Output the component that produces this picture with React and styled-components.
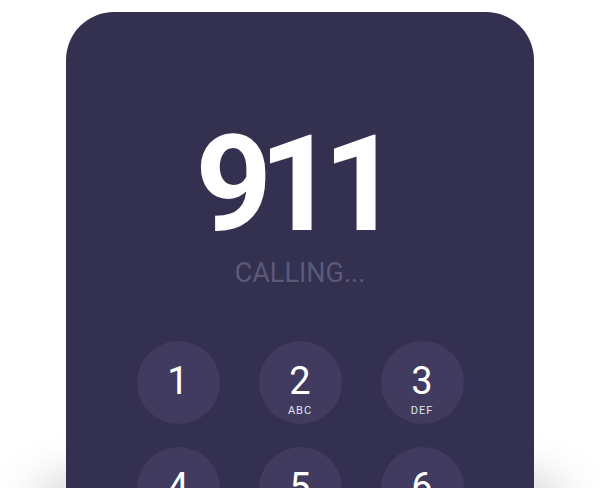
import React from "react";
import styled, { createGlobalStyle } from "styled-components";

const Global = createGlobalStyle`
  html, body { margin: 0; padding: 0; background: #ffffff; }
  body { font-family: Roboto, "Liberation Sans", sans-serif; }
`;

const Screen = styled.div`
  height: 500px;
  background: #ffffff;
`;

const Page = styled.div`
  position: relative;
  height: 488px;
  overflow: hidden;
  padding-top: 12px;
  box-sizing: border-box;
  display: flex;
  justify-content: center;
  &::before {
    content: "";
    position: absolute;
    left: 30px;
    right: 30px;
    bottom: -45px;
    height: 70px;
    background: rgba(0, 0, 0, 0.2);
    filter: blur(22px);
    border-radius: 50%;
  }
`;

const Phone = styled.div`
  position: relative;
  width: 468px;
  height: 560px;
  flex-shrink: 0;
  background: #33314f;
  border-radius: 48px 48px 0 0;
  padding-top: 106px;
  box-sizing: border-box;
  display: flex;
  flex-direction: column;
  align-items: center;
`;

const Number = styled.div`
  font-family: Roboto, sans-serif;
  font-weight: 700;
  font-size: 134px;
  line-height: 1;
  color: #ffffff;
  letter-spacing: -13px;
  padding-right: 18px;
`;

const Status = styled.div`
  margin-top: 8px;
  font-family: Roboto, sans-serif;
  font-size: 27px;
  line-height: 1;
  color: #5b5979;
`;

const Keypad = styled.div`
  margin-top: 54px;
  display: grid;
  grid-template-columns: repeat(3, 83px);
  column-gap: 39px;
  row-gap: 23px;
`;

const Key = styled.div`
  width: 83px;
  height: 83px;
  border-radius: 50%;
  background: #403b5f;
  display: flex;
  flex-direction: column;
  align-items: center;
  padding-top: 21px;
  box-sizing: border-box;
  color: #ffffff;
`;

const Digit = styled.div`
  font-size: 38px;
  line-height: 1;
`;

const Letters = styled.div`
  margin-top: 5px;
  font-size: 11px;
  line-height: 1;
  letter-spacing: 1px;
  color: #e4e2ee;
`;

const keys = [
  ["1", ""], ["2", "ABC"], ["3", "DEF"],
  ["4", "GHI"], ["5", "JKL"], ["6", "MNO"],
];

export default function App() {
  return (
    <>
      <Global />
      <Screen>
        <Page>
          <Phone>
            <Number>911</Number>
            <Status>CALLING...</Status>
            <Keypad>
              {keys.map(([d, l]) => (
                <Key key={d}>
                  <Digit>{d}</Digit>
                  <Letters>{l}</Letters>
                </Key>
              ))}
            </Keypad>
          </Phone>
        </Page>
      </Screen>
    </>
  );
}
